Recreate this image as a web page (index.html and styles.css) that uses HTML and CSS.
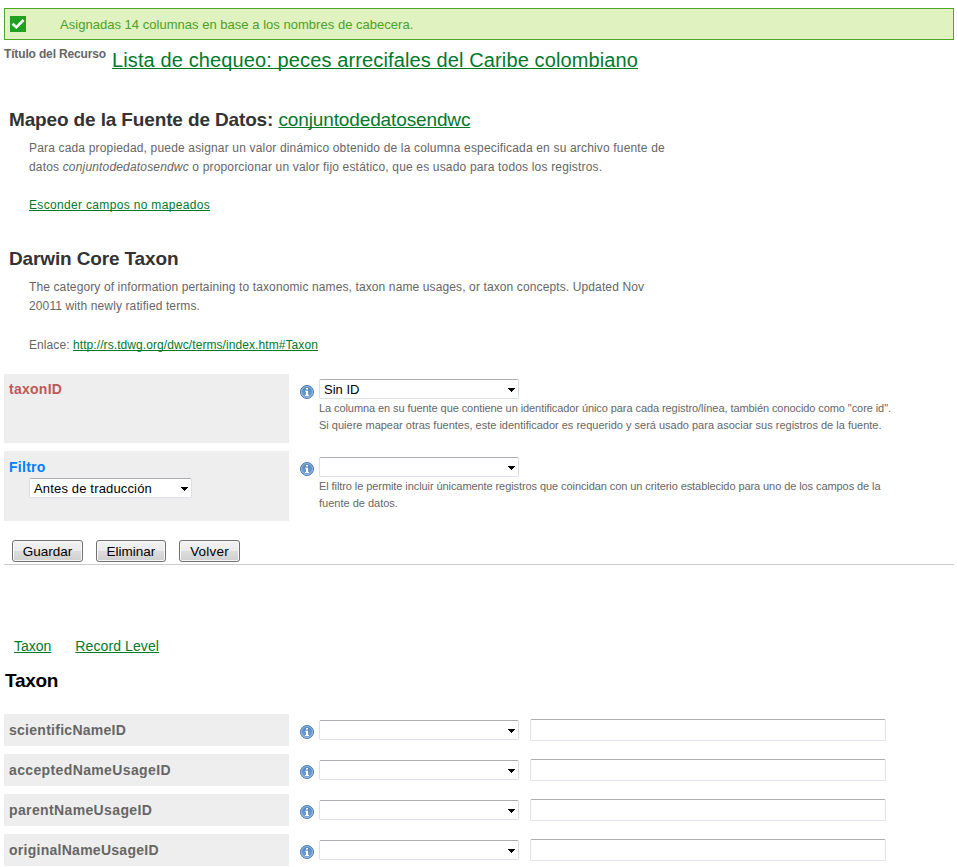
FILE: index.html
```html
<!DOCTYPE html>
<html lang="es">
<head>
<meta charset="utf-8">
<title>Mapeo de la Fuente de Datos</title>
<link rel="stylesheet" href="styles.css">
</head>
<body>
<svg class="defs" width="0" height="0" aria-hidden="true">
  <defs>
    <linearGradient id="blue" x1="0" y1="0" x2="0" y2="1"><stop offset="0" stop-color="#4d82b8"/><stop offset="1" stop-color="#78a5d8"/></linearGradient>
    <symbol id="info" viewBox="0 0 14 14">
      <circle cx="7" cy="7" r="6.5" fill="url(#blue)" stroke="#4a7ab4"/>
      <circle cx="7" cy="7" r="5.5" fill="none" stroke="#a5c5e6" stroke-width=".8"/>
      <path d="M6 3h2v1.5H6zM5 5.7H8V10h1v1H5v-1h1V6.6H5z" fill="#fff"/>
    </symbol>
    <symbol id="arrow" viewBox="0 0 7 4"><path d="M0 0h7v1H6v1H5v1H4v1H3V3H2V2H1V1H0z" fill="#000"/></symbol>
  </defs>
</svg>
<div class="alert">
  <svg class="check" viewBox="0 0 16 16"><rect width="16" height="16" fill="#22a022"/><path d="M2.5 7.8l3.8 3.5L13.5 4" fill="none" stroke="#fff" stroke-width="2.6"/></svg>
  <span class="alert-text">Asignadas 14 columnas en base a los nombres de cabecera.</span>
</div>
<header class="resource"><span class="resource-label">Título del Recurso</span><a class="resource-name" href="#">Lista de chequeo: peces arrecifales del Caribe colombiano</a></header>

<h2 class="heading">Mapeo de la Fuente de Datos: <a class="source" href="#">conjuntodedatosendwc</a></h2>
<p class="intro mapping-intro">Para cada propiedad, puede asignar un valor dinámico obtenido de la columna especificada en su archivo fuente de<br>datos <em>conjuntodedatosendwc</em> o proporcionar un valor fijo estático, que es usado para todos los registros.</p>
<p class="intro spaced"><a class="toggle" href="#">Esconder campos no mapeados</a></p>

<h2 class="heading second">Darwin Core Taxon</h2>
<p class="intro core-intro">The category of information pertaining to taxonomic names, taxon name usages, or taxon concepts. Updated Nov<br>20011 with newly ratified terms.</p>
<p class="intro spaced core-link">Enlace: <a href="#">http://rs.tdwg.org/dwc/terms/index.htm#Taxon</a></p>

<section class="row tall first">
  <div class="name required">taxonID</div>
  <svg class="info"><use href="#info"/></svg>
  <div class="field">
    <div class="select"><span>Sin ID</span><svg class="arrow"><use href="#arrow"/></svg></div>
    <p class="help"><span class="tight">La columna en su fuente que contiene un identificador único para cada registro/línea, también conocido como "core id".</span><br>Si quiere mapear otras fuentes, este identificador es requerido y será usado para asociar sus registros de la fuente.</p>
  </div>
</section>
<section class="row tall filter-row">
  <div class="name filter">Filtro
    <div class="select small"><span>Antes de traducción</span><svg class="arrow"><use href="#arrow"/></svg></div>
  </div>
  <svg class="info"><use href="#info"/></svg>
  <div class="field">
    <div class="select"><svg class="arrow"><use href="#arrow"/></svg></div>
    <p class="help"><span class="tight">El filtro le permite incluir únicamente registros que coincidan con un criterio establecido para uno de los campos de la</span><br>fuente de datos.</p>
  </div>
</section>
<div class="buttons"><button class="save">Guardar</button><button class="delete">Eliminar</button><button class="back">Volver</button></div>

<nav class="groups"><a href="#">Taxon</a><a class="record" href="#">Record Level</a></nav>
<h2 class="group-title">Taxon</h2>
<section class="row">
  <div class="name">scientificNameID</div><svg class="info"><use href="#info"/></svg>
  <div class="select"><svg class="arrow"><use href="#arrow"/></svg></div><input class="value" type="text">
</section>
<section class="row">
  <div class="name wide">acceptedNameUsageID</div><svg class="info"><use href="#info"/></svg>
  <div class="select"><svg class="arrow"><use href="#arrow"/></svg></div><input class="value" type="text">
</section>
<section class="row">
  <div class="name wide">parentNameUsageID</div><svg class="info"><use href="#info"/></svg>
  <div class="select"><svg class="arrow"><use href="#arrow"/></svg></div><input class="value" type="text">
</section>
<section class="row">
  <div class="name">originalNameUsageID</div><svg class="info"><use href="#info"/></svg>
  <div class="select"><svg class="arrow"><use href="#arrow"/></svg></div><input class="value" type="text">
</section>
</body>
</html>
```
FILE: styles.css
```css
* { box-sizing: border-box; }
html { height: 100%; overflow: hidden; }
body { margin: 0; height: 867px; overflow: hidden; padding: 8px 3px 0 4px; background: #fff; color: #666; font: 12px/19px "Liberation Sans", Arial, sans-serif; }
a { color: #00792b; text-decoration: underline 1px; text-decoration-skip-ink: none; }
p, h2 { margin: 0; }
.defs { position: absolute; }

.alert { display: flex; align-items: center; height: 32px; padding-left: 5px; border: 1px solid #4da72b; background: #dff2bf; color: #4da028; font-size: 13px; letter-spacing: .025px; white-space: nowrap; }
.check { width: 16px; height: 16px; margin-right: 34px; }

.resource { display: flex; height: 40px; white-space: nowrap; }
.resource-label { width: 108px; padding-top: 5px; font-weight: bold; letter-spacing: -.15px; }
.resource-name { padding-top: 8px; font-size: 20px; line-height: 24px; letter-spacing: .12px; }

.heading { margin-top: 28px; padding-left: 5px; color: #333; font-size: 19px; line-height: 24px; letter-spacing: -.14px; white-space: nowrap; }
.heading.second { margin-top: 32px; }
.source { font-weight: normal; letter-spacing: -.12px; }
.intro { margin-top: 7px; padding-left: 25px; white-space: nowrap; }
.intro.spaced { margin-top: 19px; }
.mapping-intro { letter-spacing: .168px; }
.toggle { letter-spacing: .33px; }
.core-intro { letter-spacing: .118px; }
.intro.core-link { margin-top: 20px; letter-spacing: .08px; }

.row { display: flex; height: 32px; margin-bottom: 8px; }
.row.tall { height: 70px; }
.row.first { height: 69px; margin-top: 19px; }
.name { width: 285px; padding: 6px 5px; background: #eee; font-size: 14px; line-height: 20px; font-weight: bold; letter-spacing: .27px; }
.name.wide { letter-spacing: .37px; }
.required { padding-top: 5px; color: #c05858; }
.filter { color: #0080ff; }
.info { width: 14px; height: 14px; margin: 11px 5px 0 11px; }
.select { display: flex; align-items: center; width: 200px; height: 20px; margin-top: 6px; padding: 0 4px; border: 1px solid #dde0e8; border-top-color: #abadb3; border-radius: 2px; background: #fff; color: #000; font-size: 13px; line-height: 16px; font-weight: normal; letter-spacing: 0; }
.select span { padding-top: 2px; }
.first .select { margin-top: 5px; }
.select.small { width: 163px; margin: 1px 0 0 20px; letter-spacing: .16px; }
.arrow { width: 7px; height: 4px; margin: 2px -1px 0 auto; }
.help { padding-top: 1px; font-size: 11px; line-height: 17px; white-space: nowrap; }
.tight { letter-spacing: -.08px; }
.value { width: 356px; height: 22px; margin: 5px 0 0 11px; border: 1px solid #e2e3ea; border-top-color: #abadb3; border-radius: 2px; }

.buttons { display: flex; gap: 13px; height: 36px; padding: 11px 0 0 8px; border-bottom: 1px solid #ccc; }
button { height: 22px; padding: 1px 0 0; border: 1px solid #707070; border-radius: 3px; background: linear-gradient(#f2f2f2, #ebebeb 50%, #ddd 50%, #cfcfcf); box-shadow: inset 0 0 0 1px #f8f8f8; color: #000; font: 13.5px/18px "Liberation Sans", Arial, sans-serif; }
.save { width: 71px; }
.delete { width: 70px; }
.back { width: 61px; letter-spacing: .2px; }

.groups { display: flex; gap: 24px; margin-top: 71px; padding-left: 10px; font-size: 14px; line-height: 20px; }
.record { letter-spacing: .1px; }
.group-title { margin: 13px 0 21px; padding-left: 1px; color: #000; font-size: 19px; line-height: 24px; letter-spacing: -.3px; }
```
